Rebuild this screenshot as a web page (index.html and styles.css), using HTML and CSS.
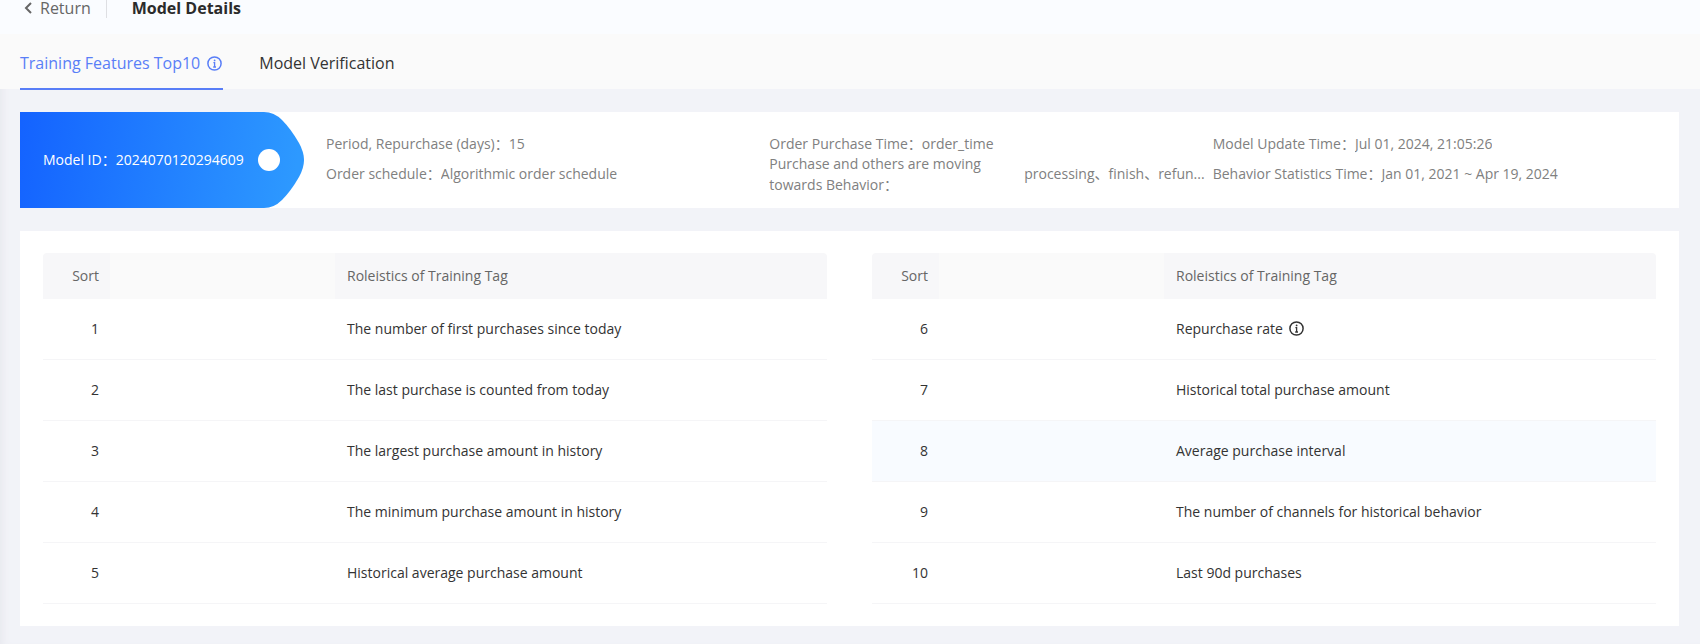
FILE: index.html
```html
<!DOCTYPE html>
<html lang="en">
<head>
<meta charset="utf-8">
<title>Model Details</title>
<link rel="stylesheet" href="styles.css">
</head>
<body>
<header class="topbar">
  <a class="back" href="#"><svg class="back-icon" viewBox="0 0 8 12" aria-hidden="true"><path d="M7 1 2 6l5 5"/></svg>Return</a>
  <h1 class="title">Model Details</h1>
</header>
<nav class="tabs">
  <a class="tab tab-active" href="#">Training Features Top10
    <svg class="info-icon" viewBox="0 0 15 15" aria-hidden="true"><circle class="ring" cx="7.5" cy="7.5" r="6.6"/><circle cx="7.6" cy="4.4" r=".9"/><path class="stem" d="M6.4 6.6h1.2v4.2M6.2 11h2.8"/></svg></a>
  <a class="tab" href="#">Model Verification</a>
</nav>
<main class="content">
  <section class="summary">
    <div class="model-tag">
      <svg class="tag-shape" viewBox="0 0 284 96" preserveAspectRatio="none" aria-hidden="true">
        <defs><linearGradient id="tagFill" gradientUnits="userSpaceOnUse" x1="0" y1="20" x2="276" y2="60"><stop offset="0" stop-color="#1463ff"/><stop offset="1" stop-color="#2d99ff"/></linearGradient></defs>
        <path fill="url(#tagFill)" d="M0 0H244Q254 0 262 8Q271 17 279 31Q284 40 284 48Q284 56 279 65Q271 79 262 88Q254 96 244 96H0Z"/>
      </svg>
      <span class="tag-text">Model ID：2024070120294609</span>
      <span class="tag-hole"></span>
    </div>
    <dl class="facts">
      <div class="fact"><dt>Period, Repurchase (days)：</dt><dd>15</dd></div>
      <div class="fact"><dt>Order Purchase Time：</dt><dd>order_time</dd></div>
      <div class="fact"><dt>Model Update Time：</dt><dd>Jul 01, 2024, 21:05:26</dd></div>
      <div class="fact"><dt>Order schedule：</dt><dd>Algorithmic order schedule</dd></div>
      <div class="fact fact-long"><dt>Purchase and others are moving towards Behavior：</dt><dd>processing、finish、refun...</dd></div>
      <div class="fact"><dt>Behavior Statistics Time：</dt><dd>Jan 01, 2021 ~ Apr 19, 2024</dd></div>
    </dl>
  </section>
  <section class="features">
    <table class="ranking">
      <thead><tr><th class="sort">Sort</th><th class="blank"></th><th>Roleistics of Training Tag</th></tr></thead>
      <tbody>
        <tr><td class="sort">1</td><td></td><td>The number of first purchases since today</td></tr>
        <tr><td class="sort">2</td><td></td><td>The last purchase is counted from today</td></tr>
        <tr><td class="sort">3</td><td></td><td>The largest purchase amount in history</td></tr>
        <tr><td class="sort">4</td><td></td><td>The minimum purchase amount in history</td></tr>
        <tr><td class="sort">5</td><td></td><td>Historical average purchase amount</td></tr>
      </tbody>
    </table>
    <table class="ranking">
      <thead><tr><th class="sort">Sort</th><th class="blank"></th><th>Roleistics of Training Tag</th></tr></thead>
      <tbody>
        <tr><td class="sort">6</td><td></td><td><span class="with-icon">Repurchase rate <svg class="info-icon" viewBox="0 0 15 15" aria-hidden="true"><circle class="ring" cx="7.5" cy="7.5" r="6.6"/><circle cx="7.6" cy="4.4" r=".9"/><path class="stem" d="M6.4 6.6h1.2v4.2M6.2 11h2.8"/></svg></span></td></tr>
        <tr><td class="sort">7</td><td></td><td>Historical total purchase amount</td></tr>
        <tr class="row-hover"><td class="sort">8</td><td></td><td>Average purchase interval</td></tr>
        <tr><td class="sort">9</td><td></td><td>The number of channels for historical behavior</td></tr>
        <tr><td class="sort">10</td><td></td><td>Last 90d purchases</td></tr>
      </tbody>
    </table>
  </section>
</main>
</body>
</html>
```
FILE: styles.css
```css
* { box-sizing: border-box; }
body {
  margin: 0;
  min-height: 100vh;
  background: #f2f3f8;
  box-shadow: inset 8px 0 8px -6px #e6e7ed;
  color: #333;
  font: 14px/21px "Open Sans", "Noto Sans CJK SC", sans-serif;
}
a { color: inherit; text-decoration: none; }
.topbar {
  display: flex;
  align-items: flex-start;
  height: 34px;
  padding-left: 24px;
  background: #fafcff;
}
.back {
  display: flex;
  align-items: center;
  gap: 8px;
  height: 18px;
  padding-right: 15px;
  padding-bottom: 2px;
  border-right: 1px solid #dedfe3;
  color: #666;
  font-size: 16px;
  line-height: 16px;
}
.back-icon { width: 8px; height: 12px; fill: none; stroke: currentColor; stroke-width: 2; }
.title { margin: 0 0 0 25px; font-size: 16px; line-height: 16px; font-weight: 700; color: #2b2b2b; }
.tabs { display: flex; gap: 36px; height: 55px; padding-left: 20px; background: #fafafa; }
.tab { display: flex; align-items: center; gap: 7px; height: 56px; padding-top: 4px; padding-right: 1px; border-bottom: 2px solid transparent; font-size: 16px; }
.tab-active { color: #597ef7; border-bottom-color: #597ef7; }
.info-icon { flex: none; width: 15px; height: 15px; fill: currentColor; }
.info-icon .ring, .info-icon .stem { fill: none; stroke: currentColor; stroke-width: 1.5; }
.info-icon .stem { stroke-width: 1.3; }
.content { display: flex; flex-direction: column; gap: 23px; padding: 23px 21px 18px 20px; }
.summary { display: flex; align-items: center; min-height: 96px; background: #fff; }
.model-tag {
  position: relative;
  flex: none;
  display: flex;
  align-items: center;
  justify-content: space-between;
  width: 284px;
  height: 96px;
  padding: 0 24px 0 23px;
  color: #fff;
}
.tag-shape { position: absolute; inset: 0; width: 100%; height: 100%; }
.tag-text { position: relative; padding-bottom: 2px; }
.tag-hole { position: relative; width: 22px; height: 22px; border-radius: 50%; background: #fff; }
.facts {
  flex: 1;
  display: grid;
  grid-template-columns: repeat(3, 1fr);
  grid-auto-rows: 30px;
  margin: 0;
  padding: 0 23px 3px 22px;
  color: #808080;
}
.fact { display: flex; align-items: center; min-width: 0; }
.fact dd { margin: 0; white-space: nowrap; overflow: hidden; text-overflow: ellipsis; }
.fact-long { padding-right: 8px; }
.fact-long dt { flex: 1; }
.fact-long dd { flex: none; }
.features { display: grid; grid-template-columns: 1fr 1fr; gap: 45px; padding: 22px 23px; background: #fff; }
.ranking { width: 100%; table-layout: fixed; border-collapse: separate; border-spacing: 0; }
.ranking th { height: 46px; padding: 0 12px 2px; background: #f7f7f9; color: #666; font-weight: 400; text-align: left; }
.ranking th:first-child { width: 67px; border-top-left-radius: 4px; }
.ranking th:last-child { border-top-right-radius: 4px; }
.ranking th.blank { width: 225px; background: #fafafa; }
.ranking td { height: 61px; padding: 0 12px 2px; border-bottom: 1px solid #f5f5f7; }
.ranking .sort { padding-left: 0; padding-right: 11px; text-align: right; }
.row-hover td { background: #f8fbff; }
.with-icon { display: flex; align-items: center; gap: 6px; }
```
